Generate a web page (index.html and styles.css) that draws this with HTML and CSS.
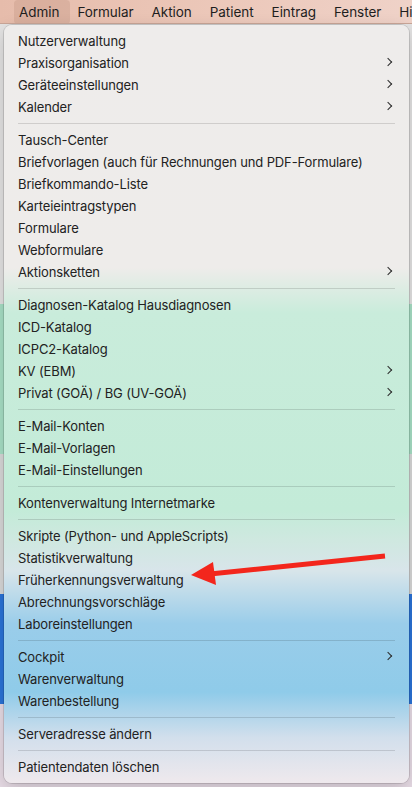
FILE: index.html
```html
<!DOCTYPE html>
<html lang="de">
<head>
    <meta charset="UTF-8">
    <meta name="viewport" content="width=device-width, initial-scale=1.0">
    <title>Admin-Menü</title>
    <link rel="stylesheet" href="styles.css">
</head>
<body>
    <div class="menubar">
        <span class="menubar-item active">Admin</span>
        <span class="menubar-item">Formular</span>
        <span class="menubar-item">Aktion</span>
        <span class="menubar-item">Patient</span>
        <span class="menubar-item">Eintrag</span>
        <span class="menubar-item">Fenster</span>
        <span class="menubar-item">Hilfe</span>
    </div>

    <div class="stage">
        <!-- Fenster im Hintergrund -->
        <div class="backdrop">
            <div class="band band-grey"></div>
            <div class="band band-green"></div>
            <div class="band band-light"></div>
            <div class="band band-blue"></div>
            <div class="band band-pink"></div>
        </div>

        <div class="dropdown">
            <div class="item">Nutzerverwaltung</div>
            <div class="item sub">Praxisorganisation</div>
            <div class="item sub">Geräteeinstellungen</div>
            <div class="item sub">Kalender</div>
            <div class="sep"></div>
            <div class="item">Tausch-Center</div>
            <div class="item">Briefvorlagen (auch für Rechnungen und PDF-Formulare)</div>
            <div class="item">Briefkommando-Liste</div>
            <div class="item">Karteieintragstypen</div>
            <div class="item">Formulare</div>
            <div class="item">Webformulare</div>
            <div class="item sub">Aktionsketten</div>
            <div class="sep"></div>
            <div class="item">Diagnosen-Katalog Hausdiagnosen</div>
            <div class="item">ICD-Katalog</div>
            <div class="item">ICPC2-Katalog</div>
            <div class="item sub">KV (EBM)</div>
            <div class="item sub">Privat (GOÄ) / BG (UV-GOÄ)</div>
            <div class="sep"></div>
            <div class="item">E-Mail-Konten</div>
            <div class="item">E-Mail-Vorlagen</div>
            <div class="item">E-Mail-Einstellungen</div>
            <div class="sep"></div>
            <div class="item">Kontenverwaltung Internetmarke</div>
            <div class="sep"></div>
            <div class="item">Skripte (Python- und AppleScripts)</div>
            <div class="item">Statistikverwaltung</div>
            <div class="item">Früherkennungsverwaltung</div>
            <div class="item">Abrechnungsvorschläge</div>
            <div class="item">Laboreinstellungen</div>
            <div class="sep"></div>
            <div class="item sub">Cockpit</div>
            <div class="item">Warenverwaltung</div>
            <div class="item">Warenbestellung</div>
            <div class="sep"></div>
            <div class="item">Serveradresse ändern</div>
            <div class="sep"></div>
            <div class="item">Patientendaten löschen</div>
        </div>

        <!-- roter Hinweispfeil -->
        <svg class="arrow" width="412" height="763" viewBox="0 0 412 763">
            <line x1="385" y1="532" x2="210" y2="550" stroke="#f3261c" stroke-width="5"/>
            <polygon points="191,551 213,538 216,561" fill="#f3261c"/>
        </svg>
    </div>
</body>
</html>
```

FILE: styles.css
```css
body {
    margin: 0;
    width: 412px;
    height: 787px;
    overflow: hidden;
    font-family: Inter, 'Noto Sans', sans-serif;
    font-size: 13px;
    color: #222;
    background: #ececec;
}

.menubar {
    height: 24px;
    display: flex;
    align-items: center;
    padding-left: 14px;
    background: linear-gradient(90deg, #e6bcab 0%, #ecc8ba 55%, #efd2c8 100%);
    border-bottom: 1px solid #c9a597;
    box-sizing: border-box;
    white-space: nowrap;
    overflow: hidden;
}

.menubar-item {
    font-size: 13.5px;
    letter-spacing: -0.05px;
    color: #1e1e1e;
    padding: 4px 9px;
    border-radius: 4px;
}

.menubar-item.active {
    background: rgba(120, 70, 50, 0.12);
    padding: 4px 11px 4px 5px;
}

.menubar-item.active + .menubar-item {
    padding-left: 7px;
}

.stage {
    position: relative;
    height: 763px;
}

.backdrop {
    display: flex;
    flex-direction: column;
    height: 100%;
}

.band-grey { height: 280px; background: #e4e3e3; }
.band-green { height: 150px; background: #a8e0c6; }
.band-light { height: 140px; background: #d9d9d9; }
.band-blue { height: 110px; background: #2a74d9; }
.band-pink { flex: 1; background: #e8dce6; }

.dropdown {
    position: absolute;
    left: 4px;
    top: 1px;
    width: 405px;
    padding: 5px 0;
    box-sizing: border-box;
    border-radius: 8px;
    letter-spacing: -0.13px;
    box-shadow: 0 0 0 1px rgba(0, 0, 0, 0.12), 0 6px 18px rgba(0, 0, 0, 0.18);
    background: linear-gradient(180deg,
        #eeeceb 0%,
        #eeecea 32%,
        #c9ecdb 38%,
        #c3ebd8 64%,
        #cfe8e0 68%,
        #d8e5ea 72%,
        #9acdea 79%,
        #8fcbe9 88%,
        #d2dfec 94%,
        #efe9ed 100%);
}

.item {
    height: 22px;
    line-height: 22px;
    padding: 0 18px 0 14px;
    position: relative;
    white-space: nowrap;
}

.item.sub::after {
    content: "";
    position: absolute;
    right: 18px;
    top: 7px;
    width: 5px;
    height: 5px;
    border-right: 1.8px solid #2a2a2a;
    border-top: 1.8px solid #2a2a2a;
    transform: rotate(45deg);
}

.sep {
    height: 11px;
    display: flex;
    align-items: center;
    padding: 0 14px;
}

.sep::before {
    content: "";
    flex: 1;
    height: 1px;
    background: rgba(0, 0, 0, 0.13);
}

.arrow {
    position: absolute;
    left: 0;
    top: 0;
}
```
